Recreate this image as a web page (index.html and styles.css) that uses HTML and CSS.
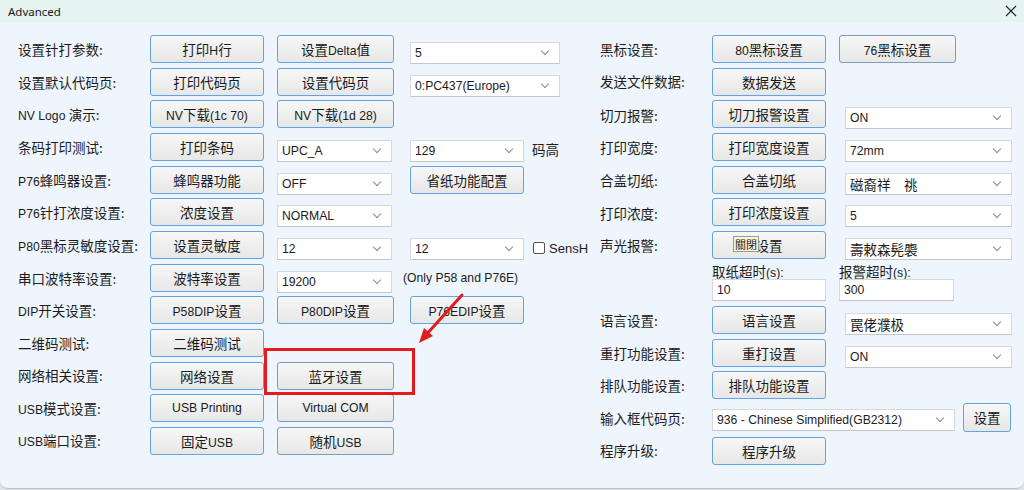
FILE: index.html
```html
<!DOCTYPE html>
<html lang="zh-CN">
<head>
    <meta charset="UTF-8">
    <title>Advanced</title>
    <link rel="stylesheet" href="styles.css">
</head>
<body>
<div class="window">
    <div class="titlebar">
        <span class="title">Advanced</span>
        <svg class="close" width="12" height="12" viewBox="0 0 12 12"><path d="M1 1 L11 11 M11 1 L1 11" stroke="#222" stroke-width="1.1"/></svg>
    </div>
    <div class="content">
        <!-- left column -->
        <div class="panel left">
            <div class="row">
                <span class="lbl">设置针打参数:</span>
                <button class="btn">打印<span class="en">H</span>行</button>
                <button class="btn c2">设置<span class="en">Delta</span>值</button>
                <div class="combo c3 wide">5</div>
            </div>
            <div class="row">
                <span class="lbl">设置默认代码页:</span>
                <button class="btn">打印代码页</button>
                <button class="btn c2">设置代码页</button>
                <div class="combo c3 wide">0:PC437(Europe)</div>
            </div>
            <div class="row">
                <span class="lbl"><span class="en">NV Logo </span>演示:</span>
                <button class="btn"><span class="en">NV</span>下载<span class="en">(1c 70)</span></button>
                <button class="btn c2"><span class="en">NV</span>下载<span class="en">(1d 28)</span></button>
            </div>
            <div class="row">
                <span class="lbl">条码打印测试:</span>
                <button class="btn">打印条码</button>
                <div class="combo c2">UPC_A</div>
                <div class="cell c3">
                    <div class="combo">129</div>
                    <span class="note">码高</span>
                </div>
            </div>
            <div class="row">
                <span class="lbl"><span class="en">P76</span>蜂鸣器设置:</span>
                <button class="btn">蜂鸣器功能</button>
                <div class="combo c2">OFF</div>
                <button class="btn c3">省纸功能配置</button>
            </div>
            <div class="row">
                <span class="lbl"><span class="en">P76</span>针打浓度设置:</span>
                <button class="btn">浓度设置</button>
                <div class="combo c2">NORMAL</div>
            </div>
            <div class="row">
                <span class="lbl"><span class="en">P80</span>黑标灵敏度设置:</span>
                <button class="btn">设置灵敏度</button>
                <div class="combo c2">12</div>
                <div class="cell c3">
                    <div class="combo">12</div>
                    <label class="check"><span class="box"></span>SensH</label>
                </div>
            </div>
            <div class="row">
                <span class="lbl">串口波特率设置:</span>
                <button class="btn">波特率设置</button>
                <div class="combo c2">19200</div>
                <span class="only c3">(Only P58 and P76E)</span>
            </div>
            <div class="row">
                <span class="lbl"><span class="en">DIP</span>开关设置:</span>
                <button class="btn"><span class="en">P58DIP</span>设置</button>
                <button class="btn c2"><span class="en">P80DIP</span>设置</button>
                <button class="btn c3"><span class="en">P76EDIP</span>设置</button>
            </div>
            <div class="row">
                <span class="lbl">二维码测试:</span>
                <button class="btn">二维码测试</button>
            </div>
            <div class="row">
                <span class="lbl">网络相关设置:</span>
                <button class="btn">网络设置</button>
                <button class="btn c2 dim">蓝牙设置</button>
            </div>
            <div class="row">
                <span class="lbl"><span class="en">USB</span>模式设置:</span>
                <button class="btn en-all">USB Printing</button>
                <button class="btn c2 dim en-all">Virtual COM</button>
            </div>
            <div class="row">
                <span class="lbl"><span class="en">USB</span>端口设置:</span>
                <button class="btn">固定<span class="en">USB</span></button>
                <button class="btn c2 dim">随机<span class="en">USB</span></button>
            </div>
        </div>

        <!-- right column -->
        <div class="panel right">
            <div class="row">
                <span class="lbl">黑标设置:</span>
                <button class="btn"><span class="en">80</span>黑标设置</button>
                <button class="btn c2 dim"><span class="en">76</span>黑标设置</button>
            </div>
            <div class="row">
                <span class="lbl">发送文件数据:</span>
                <button class="btn">数据发送</button>
            </div>
            <div class="row">
                <span class="lbl">切刀报警:</span>
                <button class="btn">切刀报警设置</button>
                <div class="combo c2 side">ON</div>
            </div>
            <div class="row">
                <span class="lbl">打印宽度:</span>
                <button class="btn">打印宽度设置</button>
                <div class="combo c2 side">72mm</div>
            </div>
            <div class="row">
                <span class="lbl">合盖切纸:</span>
                <button class="btn">合盖切纸</button>
                <div class="combo c2 side cjk">磁裔祥　祧</div>
            </div>
            <div class="row">
                <span class="lbl">打印浓度:</span>
                <button class="btn">打印浓度设置</button>
                <div class="combo c2 side">5</div>
            </div>
            <div class="row">
                <span class="lbl">声光报警:</span>
                <button class="btn has-tip">设置<span class="tip">關閉</span></button>
                <div class="combo c2 side cjk">壽敕森髡褜</div>
            </div>
            <div class="timeouts">
                <div class="field">
                    <span class="cap">取纸超时<span class="en">(s):</span></span>
                    <div class="input">10</div>
                </div>
                <div class="field">
                    <span class="cap">报警超时<span class="en">(s):</span></span>
                    <div class="input">300</div>
                </div>
            </div>
            <div class="row">
                <span class="lbl">语言设置:</span>
                <button class="btn">语言设置</button>
                <div class="combo c2 side cjk">罠佬濮极</div>
            </div>
            <div class="row">
                <span class="lbl">重打功能设置:</span>
                <button class="btn">重打设置</button>
                <div class="combo c2 side">ON</div>
            </div>
            <div class="row">
                <span class="lbl">排队功能设置:</span>
                <button class="btn">排队功能设置</button>
            </div>
            <div class="row">
                <span class="lbl">输入框代码页:</span>
                <div class="cell span">
                    <div class="combo codepage">936 - Chinese Simplified(GB2312)</div>
                    <button class="btn small">设置</button>
                </div>
            </div>
            <div class="row">
                <span class="lbl">程序升级:</span>
                <button class="btn">程序升级</button>
            </div>
        </div>

        <!-- annotation drawn over the dialog -->
        <div class="mark-box"></div>
        <svg class="mark-arrow" width="60" height="60" viewBox="0 0 60 60">
            <path d="M52 5 L15 46" stroke="#e31b1d" stroke-width="3" stroke-linecap="round"/>
            <polygon points="9,53 23,46 14,38" fill="#e31b1d"/>
        </svg>
    </div>
</div>
</body>
</html>
```

FILE: styles.css
```css
html {
    background: #dfe3e6;
}
body {
    margin: 0;
    width: 1024px;
    height: 490px;
    overflow: hidden;
    font-family: "Noto Sans CJK SC", "Noto Sans", sans-serif;
    font-size: 13.5px;
    color: #1c1c1c;
}
/* latin runs are narrower than the CJK glyphs in the original dialog */
.en, .en-all, .combo, .input, .only, .check {
    font-family: "Liberation Sans", "Noto Sans CJK SC", sans-serif;
    font-size: 12.2px;
}
.combo.cjk {
    font-family: "Noto Sans CJK SC", sans-serif;
    font-size: 13.5px;
}
.window {
    height: 488px;
    background: #eef5fc;
    border-bottom: 1px solid #b9c0c6;
    border-radius: 0 0 8px 8px;
    overflow: hidden;
}
.titlebar {
    height: 22px;
    background: #e5f4f1;
    display: flex;
    align-items: center;
    justify-content: space-between;
    padding: 0 6px 0 8px;
}
.title {
    font-family: "Noto Sans", sans-serif;
    font-size: 11.5px;
    color: #1a1a1a;
}
.close {
    margin-right: 1px;
}
.content {
    position: relative;
    display: flex;
    gap: 40px;
    padding: 13px 0 0 18px;
}
.panel {
    display: flex;
    flex-direction: column;
    gap: 4.67px;
}
.panel.left {
    width: 542px;
}
.row {
    display: grid;
    height: 28px;
    align-items: start;
}
.left .row {
    grid-template-columns: 132px 127px 133px 150px;
}
.right .row {
    grid-template-columns: 112px 127px 180px;
}
.row > * {
    grid-row: 1;
}
.c2 { grid-column: 3; }
.c3 { grid-column: 4; }
.lbl {
    grid-column: 1;
    align-self: center;
    white-space: nowrap;
    line-height: 1;
    padding-top: 1px;
}
.btn {
    grid-column: 2;
    width: 114px;
    height: 28px;
    padding: 0;
    margin: 0;
    font-family: inherit;
    font-size: 13.5px;
    color: #1a1a1a;
    border: 1px solid #64a3e3;
    border-radius: 3px;
    background: linear-gradient(#f7f7f7, #e7e7e7);
    white-space: nowrap;
}
.btn.en-all {
    font-family: "Liberation Sans", sans-serif;
    font-size: 12.2px;
}
.left .btn.c2 {
    width: 117px;
}
.btn.c2 { grid-column: 3; }
.btn.c3 { grid-column: 4; }
.btn.dim {
    border-color: #7d9abf;
}
.right .btn.c2 {
    width: 117px;
}
.has-tip {
    position: relative;
}
.tip {
    position: absolute;
    left: 20px;
    top: 4px;
    width: 26px;
    height: 16px;
    box-sizing: border-box;
    border: 1px solid #9a9a9a;
    background: #fbf6d8;
    font-size: 11px;
    line-height: 14px;
    text-align: center;
    color: #222;
}
.combo {
    position: relative;
    flex-shrink: 0;
    width: 114px;
    height: 22px;
    margin-top: 7px;
    box-sizing: border-box;
    border: 1px solid #d6d9dc;
    border-bottom-color: #c4c7ca;
    background: #fff;
    padding-left: 4px;
    line-height: 20px;
    white-space: nowrap;
}
.combo::after {
    content: "";
    position: absolute;
    right: 11px;
    top: 5px;
    width: 5px;
    height: 5px;
    border-right: 1px solid #8a8a8a;
    border-bottom: 1px solid #8a8a8a;
    transform: rotate(45deg);
}
.combo.wide {
    width: 150px;
}
.left .combo.c2 {
    width: 115px;
}
.combo.side {
    width: 167px;
    margin-left: 6px;
}
.combo.codepage {
    width: 243px;
    margin-top: 5px;
}
.cell {
    display: flex;
    align-items: flex-start;
}
.cell.span {
    grid-column: 2 / 4;
    gap: 8px;
}
.note {
    margin: 10px 0 0 8px;
    line-height: 1;
    white-space: nowrap;
}
.check {
    display: flex;
    align-items: center;
    flex-shrink: 0;
    margin: 11px 0 0 9px;
    line-height: 1;
    font-size: 13px;
    white-space: nowrap;
}
.box {
    width: 10px;
    height: 10px;
    border: 1px solid #555;
    border-radius: 2px;
    background: #fff;
    margin-right: 4px;
}
.only {
    align-self: center;
    margin-left: -7px;
    white-space: nowrap;
    line-height: 1;
}
.btn.small {
    width: 48px;
    height: 29px;
    margin-top: -1px;
}
.timeouts {
    height: 37.67px;
    display: flex;
    padding-left: 112px;
    gap: 13px;
}
.field {
    display: flex;
    flex-direction: column;
}
.cap {
    height: 15.67px;
    line-height: 14px;
    white-space: nowrap;
}
.input {
    width: 114px;
    height: 22px;
    box-sizing: border-box;
    border: 1px solid #d6d9dc;
    border-bottom-color: #bfc2c5;
    background: #fff;
    padding-left: 4px;
    line-height: 20px;
}
.field + .field .input {
    width: 115px;
}
.mark-box {
    position: absolute;
    left: 264px;
    top: 326px;
    width: 145px;
    height: 41px;
    border: 3px solid #e31b1d;
}
.mark-arrow {
    position: absolute;
    left: 410px;
    top: 268px;
}
```
